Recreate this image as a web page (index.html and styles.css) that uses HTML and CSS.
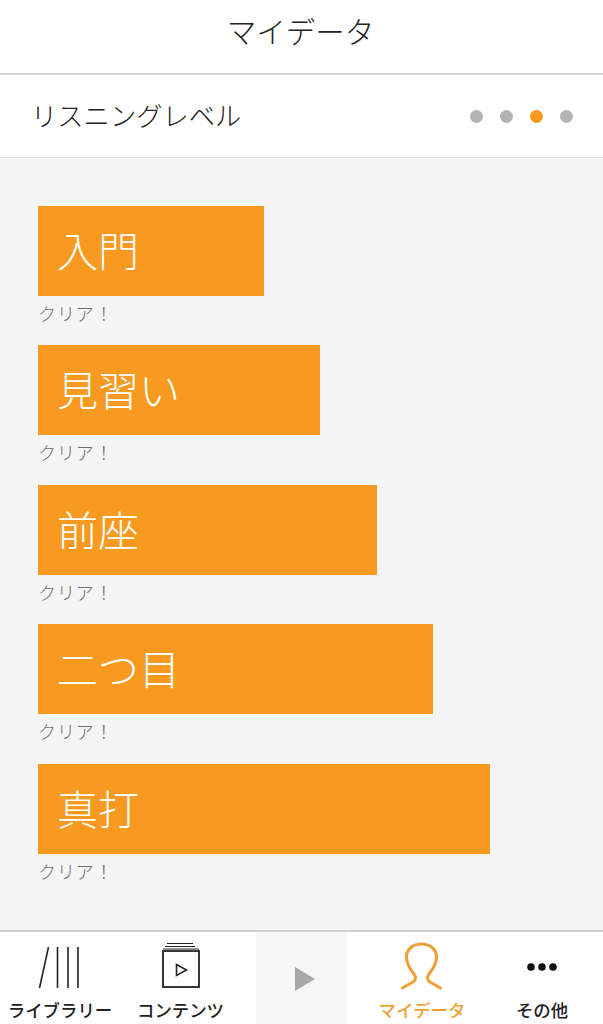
FILE: index.html
```html
<!DOCTYPE html>
<html lang="ja">
<head>
<meta charset="utf-8">
<title>マイデータ</title>
<link rel="stylesheet" href="styles.css">
</head>
<body>
<div class="app">
  <header class="title-bar"><h1 class="title">マイデータ</h1></header>
  <section class="section-bar">
    <h2 class="section-title">リスニングレベル</h2>
    <div class="dots">
      <span class="dot"></span><span class="dot"></span><span class="dot dot-active"></span><span class="dot"></span>
    </div>
  </section>
  <main class="levels">
    <div class="level"><div class="bar bar-1">入門</div><p class="status">クリア！</p></div>
    <div class="level"><div class="bar bar-2">見習い</div><p class="status">クリア！</p></div>
    <div class="level"><div class="bar bar-3">前座</div><p class="status">クリア！</p></div>
    <div class="level"><div class="bar bar-4">二つ目</div><p class="status">クリア！</p></div>
    <div class="level"><div class="bar bar-5">真打</div><p class="status">クリア！</p></div>
  </main>
  <nav class="tabs">
    <div class="tab">
      <svg class="icon" width="44" height="48" viewBox="0 0 44 48" fill="none" stroke="#222" stroke-width="1.6">
        <path d="M1.5 46 L10.5 5 M19.5 5 V46 M30 5 V46 M40 5 V46"/>
      </svg>
      <span class="tab-label">ライブラリー</span>
    </div>
    <div class="tab">
      <svg class="icon" width="44" height="48" viewBox="0 0 44 48" fill="none" stroke="#222">
        <path d="M8 1.5 H34 M6 4.5 H36 M4 7 H40" stroke-width="1.2"/>
        <rect x="4" y="9" width="36" height="36" stroke-width="1.8"/>
        <path d="M17.5 22.5 L27.5 28 L17.5 33.5 Z" stroke-width="1.6"/>
      </svg>
      <span class="tab-label">コンテンツ</span>
    </div>
    <div class="tab-player">
      <svg class="player-icon" width="20" height="24" viewBox="0 0 20 24"><path d="M0 0 L20 12 L0 24 Z" fill="#a9a9a9"/></svg>
    </div>
    <div class="tab tab-active">
      <svg class="icon" width="44" height="48" viewBox="0 0 44 48" fill="none" stroke="#f0a033" stroke-width="3" stroke-linecap="round">
        <path d="M2.5 46 L13 40 C16 38 16 35 14 32 C10 27 6.5 22 6.5 15 C6.5 7 13 2 21.5 2 C30 2 36.5 7 36.5 15 C36.5 22 33 27 29 32 C27 35 27 38 30 40 L40.5 46"/>
      </svg>
      <span class="tab-label">マイデータ</span>
    </div>
    <div class="tab tab-last">
      <svg class="icon" width="32" height="48" viewBox="0 0 32 48" fill="#111">
        <circle cx="5" cy="25" r="3.8"/><circle cx="16" cy="25" r="3.8"/><circle cx="27" cy="25" r="3.8"/>
      </svg>
      <span class="tab-label">その他</span>
    </div>
  </nav>
</div>
</body>
</html>
```
FILE: styles.css
```css
* { box-sizing: border-box; }
html, body { margin: 0; padding: 0; }
body {
  width: 603px;
  height: 1024px;
  overflow: hidden;
  background: #fff;
  font-family: "Noto Sans CJK JP", "Noto Sans", sans-serif;
  color: #222;
}
.app { display: flex; flex-direction: column; height: 1024px; }
.title-bar {
  height: 75px;
  flex: none;
  display: flex;
  justify-content: center;
  align-items: center;
  padding: 0 2px 14px 0;
  border-bottom: 2px solid #d6d6d6;
}
.title { margin: 0; font-size: 29.5px; font-weight: 300; line-height: 40px; }
.section-bar {
  height: 83px;
  flex: none;
  display: flex;
  align-items: center;
  justify-content: space-between;
  padding: 0 30px 0 31px;
  border-bottom: 1px solid #e2e2e2;
}
.section-title { margin: 0 0 2px; font-size: 26.3px; font-weight: 300; line-height: 36px; }
.dots { display: flex; gap: 17px; }
.dot { width: 13px; height: 13px; border-radius: 50%; background: #b3b3b3; }
.dot-active { background: #f79a1f; }
.levels {
  flex: 1;
  background: #f5f5f5;
  padding: 47.75px 38px 0;
  display: flex;
  flex-direction: column;
  gap: 23.5px;
}
.level { display: flex; flex-direction: column; }
.bar {
  height: 90px;
  background: #f79a1f;
  color: #fff;
  font-size: 41px;
  font-weight: 300;
  line-height: 87px;
  padding-left: 19px;
}
.bar-1 { width: 226px; }
.bar-2 { width: 282px; }
.bar-3 { width: 339px; }
.bar-4 { width: 395px; }
.bar-5 { width: 452px; }
.status {
  margin: 0;
  height: 26px;
  font-size: 18px;
  font-weight: 300;
  line-height: 35px;
  color: #6e6e6e;
  letter-spacing: 0.9px;
}
.tabs {
  height: 94px;
  flex: none;
  display: grid;
  grid-template-columns: 120px 121px 106px 135px 1fr;
  border-top: 2px solid #cfcfcf;
  background: #fff;
}
.tab {
  display: flex;
  flex-direction: column;
  align-items: center;
  justify-content: flex-end;
  padding-bottom: 3px;
  gap: 8px;
}
.tab-active { padding-left: 15px; }
.tab-last { padding-right: 1px; }
.tab-player {
  margin-left: 15px;
  background: #f7f7f7;
  display: flex;
  align-items: center;
  justify-content: center;
  padding: 2px 0 0 6px;
}
.tab-label { font-size: 17.4px; font-weight: 500; line-height: 23px; color: #222; white-space: nowrap; }
.tab-active .tab-label { color: #f0a033; }
.icon { display: block; }
.player-icon { display: block; }
```
